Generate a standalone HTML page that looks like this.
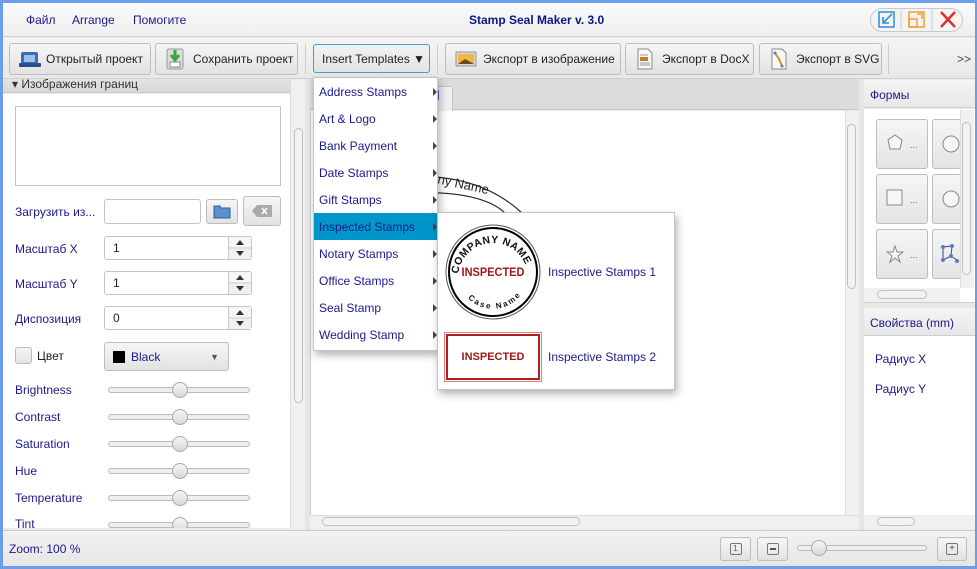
<!DOCTYPE html>
<html><head><meta charset="utf-8"><style>
*{box-sizing:border-box;margin:0;padding:0}
body{width:977px;height:569px;overflow:hidden;background:#6b9de8;font-family:"Liberation Sans","DejaVu Sans",sans-serif;font-size:12px;color:#1a1a8c;position:relative}
.a{position:absolute}
.win{left:3px;top:3px;width:972px;height:563px;background:#ececec}
.btn{position:absolute;border:1px solid #bdbdbd;border-radius:3px;background:linear-gradient(#f6f6f6,#e2e2e2);font-size:12px;color:#222;display:flex;align-items:center}
.tl{color:#1a1a8c;font-size:12px}
.sl{position:absolute;left:108px;width:142px;height:6px;border:1px solid #bbb;border-radius:3px;background:#eee}
.knob{position:absolute;left:63px;top:-6px;width:16px;height:16px;border-radius:50%;border:1px solid #aaa;background:linear-gradient(#f5f5f5,#d8d8d8)}
.spin{position:absolute;left:104px;width:148px;height:24px;border:1px solid #c4c4c4;border-radius:3px;background:#fff;color:#222;padding:4px 8px}
.spin b{position:absolute;right:0;top:0;width:23px;height:22px;border-left:1px solid #c8c8c8;background:linear-gradient(#f6f6f6 48%,#ccc 48%,#ccc 52%,#f0f0f0 52%)}
.spin b:before{content:"";position:absolute;left:7px;top:3px;border-bottom:5px solid #333;border-left:4px solid transparent;border-right:4px solid transparent}
.spin b:after{content:"";position:absolute;left:7px;top:14px;border-top:5px solid #333;border-left:4px solid transparent;border-right:4px solid transparent}
.mi{position:absolute;left:0;width:124px;height:27px;padding:7px 5px;font-size:12px;color:#1a1a8c}
.mi:after{content:"";position:absolute;right:1px;top:10px;border-left:4px solid #444;border-top:4px solid transparent;border-bottom:4px solid transparent}
.sb{position:absolute;background:#f0f0f0;border-left:1px solid #ddd}
.thumb{position:absolute;border:1px solid #c0c0c0;border-radius:5px;background:#f2f2f2}
.sh{position:absolute;width:52px;height:50px;border:1px solid #bdbdbd;border-radius:3px;background:linear-gradient(#f6f6f6,#e4e4e4)}
</style></head><body>
<div class="a win"></div>
<div class="a" style="left:3px;top:3px;width:972px;height:34px;background:linear-gradient(#fafafa,#efefef);border-bottom:1px solid #cfcfcf"></div>
<div class="a tl" style="left:26px;top:13px">Файл</div>
<div class="a tl" style="left:72px;top:13px">Arrange</div>
<div class="a tl" style="left:133px;top:13px">Помогите</div>
<div class="a" style="left:469px;top:13px;font-weight:bold;color:#0d1580;font-size:12px">Stamp Seal Maker v. 3.0</div>
<div class="a" style="left:870px;top:8px;width:93px;height:24px;border:1px solid #c8c8c8;border-radius:12px;background:#f4f4f4"></div>
<svg class="a" style="left:870px;top:8px" width="93" height="24"><line x1="31" y1="2" x2="31" y2="22" stroke="#ccc"/><line x1="62" y1="2" x2="62" y2="22" stroke="#ccc"/>
<rect x="9" y="4" width="15" height="15" fill="none" stroke="#2d8fd8" stroke-width="1.5"/><path d="M22 6 L13 15 M13 9 V15 H19" stroke="#2d8fd8" stroke-width="1.6" fill="none"/>
<rect x="39" y="4" width="15" height="15" fill="none" stroke="#f0a030" stroke-width="1.5"/><rect x="39" y="11" width="8" height="8" fill="none" stroke="#f0a030" stroke-width="1.5"/><path d="M47 6 H52 V11" stroke="#f0a030" fill="none" stroke-width="1.5"/>
<path d="M71 4 L85 19 M85 4 L71 19" stroke="#e03030" stroke-width="2.5"/></svg>
<div class="a" style="left:3px;top:38px;width:972px;height:41px;background:linear-gradient(#f4f4f4,#e8e8e8);border-bottom:1px solid #d0d0d0"></div>
<div class="btn" style="left:9px;top:43px;width:142px;height:32px;padding-left:9px"><svg width="22" height="18"><rect x="2" y="2" width="17" height="12" rx="2" fill="#3a6db8"/><rect x="5" y="5" width="11" height="7" fill="#9ec0ea"/><rect x="0" y="13" width="22" height="4" rx="1" fill="#2a4f90"/></svg><span style="margin-left:5px">Открытый проект</span></div>
<div class="btn" style="left:155px;top:43px;width:143px;height:32px;padding-left:9px"><svg width="20" height="22"><rect x="2" y="1" width="16" height="20" rx="2" fill="#ddd" stroke="#999"/><rect x="5" y="14" width="10" height="5" fill="#fff" stroke="#888"/><path d="M10 2 V11 M6 7 L10 12 L14 7" stroke="#3aa53a" stroke-width="3" fill="none"/></svg><span style="margin-left:8px">Сохранить проект</span></div>
<div class="a" style="left:305px;top:44px;width:1px;height:30px;background:#ccc"></div>
<div class="btn" style="left:313px;top:44px;width:117px;height:29px;border-color:#3aa0d8;padding-left:8px;background:linear-gradient(#f2f2f2,#e4e4e4)">Insert Templates ▼</div>
<div class="a" style="left:437px;top:44px;width:1px;height:30px;background:#ccc"></div>
<div class="btn" style="left:445px;top:43px;width:176px;height:32px;padding-left:9px"><svg width="22" height="18"><rect x="1" y="2" width="20" height="14" fill="#d8d8d8" stroke="#999"/><rect x="3" y="4" width="16" height="10" fill="#f0b840"/><path d="M3 14 L10 9 L19 14Z" fill="#6a4a20"/></svg><span style="margin-left:6px">Экспорт в изображение</span></div>
<div class="btn" style="left:625px;top:43px;width:129px;height:32px;padding-left:10px"><svg width="18" height="22"><path d="M2 1 H12 L16 5 V21 H2Z" fill="#f8f8f8" stroke="#888"/><rect x="4" y="9" width="8" height="4" fill="#c08020"/><path d="M4 15 H14 M4 17 H14 M4 7 H12" stroke="#999"/></svg><span style="margin-left:8px">Экспорт в DocX</span></div>
<div class="btn" style="left:759px;top:43px;width:123px;height:32px;padding-left:10px"><svg width="18" height="22"><path d="M2 1 H12 L16 5 V21 H2Z" fill="#f8f8f8" stroke="#888"/><path d="M5 5 L9 11 L12 18" stroke="#e09020" stroke-width="2" fill="none"/><circle cx="5" cy="5" r="1.5" fill="#5580c0"/><circle cx="12" cy="18" r="1.5" fill="#5580c0"/></svg><span style="margin-left:8px">Экспорт в SVG</span></div>
<div class="a" style="left:888px;top:44px;width:1px;height:30px;background:#ccc"></div>
<div class="a" style="left:957px;top:52px;color:#444;font-size:12px">&gt;&gt;</div>
<div class="a" style="left:3px;top:79px;width:287px;height:14px;background:linear-gradient(#e4e4e4,#d8d8d8);border-bottom:1px solid #c8c8c8"></div>
<div class="a" style="left:12px;top:77px;font-size:12px;color:#333">▾ Изображения границ</div>
<div class="a" style="left:3px;top:94px;width:287px;height:436px;background:#fff"></div>
<div class="a" style="left:15px;top:106px;width:266px;height:80px;border:1px solid #c4c4c4"></div>
<div class="a tl" style="left:15px;top:205px">Загрузить из...</div>
<div class="a" style="left:104px;top:199px;width:97px;height:25px;border:1px solid #c4c4c4;border-radius:3px;background:#fff"></div>
<div class="btn" style="left:206px;top:199px;width:32px;height:25px;justify-content:center"><svg width="18" height="15"><path d="M1 2 H7 L8 4 H17 V14 H1Z" fill="#5a8fd0" stroke="#2f5f9f"/></svg></div>
<div class="btn" style="left:243px;top:196px;width:38px;height:30px;justify-content:center"><svg width="20" height="12"><path d="M5 0 H20 V12 H5 L0 6Z" fill="#aaa"/><path d="M10 3 L15 9 M15 3 L10 9" stroke="#fff" stroke-width="1.5"/></svg></div>
<div class="a tl" style="left:15px;top:242px">Масштаб X</div><div class="spin" style="top:236px">1<b></b></div>
<div class="a tl" style="left:15px;top:277px">Масштаб Y</div><div class="spin" style="top:271px">1<b></b></div>
<div class="a tl" style="left:15px;top:312px">Диспозиция</div><div class="spin" style="top:306px">0<b></b></div>
<div class="a" style="left:15px;top:347px;width:17px;height:17px;border:1px solid #bbb;border-radius:3px;background:linear-gradient(#f6f6f6,#e4e4e4)"></div>
<div class="a" style="left:37px;top:349px;color:#222">Цвет</div>
<div class="btn" style="left:104px;top:342px;width:125px;height:29px;padding-left:8px"><span style="width:12px;height:12px;background:#000;display:inline-block"></span><span style="margin-left:6px;color:#1a1a8c">Black</span><span style="margin-left:auto;margin-right:9px;font-size:9px;color:#555">▼</span></div>
<div class="a tl" style="left:15px;top:383px">Brightness</div><div class="sl" style="top:387px"><div class="knob"></div></div>
<div class="a tl" style="left:15px;top:410px">Contrast</div><div class="sl" style="top:414px"><div class="knob"></div></div>
<div class="a tl" style="left:15px;top:437px">Saturation</div><div class="sl" style="top:441px"><div class="knob"></div></div>
<div class="a tl" style="left:15px;top:464px">Hue</div><div class="sl" style="top:468px"><div class="knob"></div></div>
<div class="a tl" style="left:15px;top:491px">Temperature</div><div class="sl" style="top:495px"><div class="knob"></div></div>
<div class="a tl" style="left:15px;top:517px">Tint</div><div class="sl" style="top:522px"><div class="knob"></div></div>
<div class="a" style="left:3px;top:528px;width:300px;height:2px;background:#ececec"></div>
<div class="sb" style="left:290px;top:80px;width:15px;height:449px"></div>
<div class="thumb" style="left:294px;top:128px;width:9px;height:275px"></div>
<div class="a" style="left:305px;top:79px;width:5px;height:451px;background:#e6e6e6"></div>
<div class="a" style="left:310px;top:79px;width:550px;height:31px;background:#dcdcdc;border-bottom:1px solid #c4c4c4"></div>
<div class="a" style="left:420px;top:86px;width:33px;height:25px;background:#f0f0f0;border:1px solid #c4c4c4;border-bottom:none;border-radius:3px 3px 0 0"></div>
<div class="a" style="left:431px;top:90px;width:8px;height:10px;background:#3a6db8"></div>
<div class="a" style="left:310px;top:111px;width:535px;height:404px;background:#fff;border-left:1px solid #c8c8c8"></div>
<svg class="a" style="left:310px;top:111px" width="535" height="404">
<path d="M90 66 Q170 60 215 105" stroke="#222" stroke-width="1.2" fill="none"/>
<path d="M90 82 Q170 78 195 102" stroke="#222" stroke-width="1.2" fill="none"/>
<text x="128" y="77" font-family="Liberation Sans" font-size="13" fill="#222" transform="rotate(12 150 70)">ny Name</text>
</svg>
<div class="sb" style="left:845px;top:111px;width:14px;height:405px"></div>
<div class="thumb" style="left:847px;top:124px;width:9px;height:165px"></div>
<div class="a" style="left:310px;top:515px;width:549px;height:14px;background:#f0f0f0;border-top:1px solid #ddd"></div>
<div class="thumb" style="left:322px;top:517px;width:258px;height:9px"></div>
<div class="a" style="left:859px;top:79px;width:5px;height:451px;background:#e6e6e6"></div>
<div class="a" style="left:864px;top:80px;width:111px;height:28px;background:linear-gradient(#f4f4f4,#e8e8e8);border-bottom:1px solid #cfcfcf"></div>
<div class="a tl" style="left:870px;top:88px">Формы</div>
<div class="a" style="left:864px;top:109px;width:111px;height:193px;background:#fff"></div>
<div class="sh" style="left:876px;top:119px"></div><div class="sh" style="left:932px;top:119px;width:30px"></div>
<div class="sh" style="left:876px;top:174px"></div><div class="sh" style="left:932px;top:174px;width:30px"></div>
<div class="sh" style="left:876px;top:229px"></div><div class="sh" style="left:932px;top:229px;width:30px"></div>
<svg class="a" style="left:876px;top:119px" width="90" height="160">
<path d="M19 16 L26 21 L24 30 H14 L12 21Z" fill="#f6f6f6" stroke="#888"/><text x="34" y="29" font-size="9" fill="#666">...</text>
<circle cx="75" cy="25" r="8" fill="#f6f6f6" stroke="#888"/>
<rect x="11" y="71" width="15" height="15" fill="#f6f6f6" stroke="#888"/><text x="34" y="84" font-size="9" fill="#666">...</text>
<circle cx="75" cy="80" r="8" fill="#f6f6f6" stroke="#888"/>
<path d="M19 127 L21 133 H27 L22 137 L24 143 L19 139 L14 143 L16 137 L11 133 H17Z" fill="#f6f6f6" stroke="#888"/><text x="34" y="139" font-size="9" fill="#666">...</text>
<path d="M67 128 L76 127 L75 137 L67 141Z M75 137 L81 141" stroke="#2a4f90" fill="none"/><g fill="#5580c0"><circle cx="67" cy="128" r="2"/><circle cx="76" cy="127" r="2"/><circle cx="75" cy="137" r="2"/><circle cx="67" cy="141" r="2"/><circle cx="81" cy="142" r="2"/></g>
</svg>
<div class="sb" style="left:960px;top:110px;width:14px;height:178px"></div>
<div class="thumb" style="left:962px;top:122px;width:9px;height:153px"></div>
<div class="a" style="left:864px;top:288px;width:96px;height:14px;background:#f0f0f0"></div>
<div class="thumb" style="left:877px;top:290px;width:50px;height:9px"></div>
<div class="a" style="left:864px;top:302px;width:111px;height:6px;background:#e8e8e8;border-top:1px solid #d0d0d0"></div>
<div class="a" style="left:864px;top:308px;width:111px;height:28px;background:linear-gradient(#f4f4f4,#e8e8e8);border-bottom:1px solid #cfcfcf"></div>
<div class="a tl" style="left:870px;top:316px">Свойства (mm)</div>
<div class="a" style="left:864px;top:336px;width:111px;height:180px;background:#fff"></div>
<div class="a tl" style="left:875px;top:352px">Радиус X</div>
<div class="a tl" style="left:875px;top:382px">Радиус Y</div>
<div class="a" style="left:864px;top:515px;width:111px;height:14px;background:#f0f0f0"></div>
<div class="thumb" style="left:877px;top:517px;width:38px;height:9px"></div>
<div class="a" style="left:3px;top:530px;width:972px;height:36px;background:linear-gradient(#f2f2f2,#e6e6e6);border-top:1px solid #ccc"></div>
<div class="a tl" style="left:9px;top:542px">Zoom: 100 %</div>
<div class="btn" style="left:720px;top:537px;width:31px;height:24px;justify-content:center"><span style="width:12px;height:12px;border:1px solid #777;border-radius:2px;font-size:8px;line-height:10px;text-align:center;color:#555">1</span></div>
<div class="btn" style="left:757px;top:537px;width:31px;height:24px;justify-content:center"><span style="width:12px;height:12px;border:1px solid #777;border-radius:2px;position:relative"><i style="position:absolute;left:2px;top:4px;width:6px;height:2px;border:1px solid #555"></i></span></div>
<div class="a" style="left:797px;top:545px;width:130px;height:6px;border:1px solid #bbb;border-radius:3px;background:#eee"></div>
<div class="knob a" style="left:811px;top:540px"></div>
<div class="btn" style="left:937px;top:537px;width:30px;height:24px;justify-content:center"><span style="width:12px;height:12px;border:1px solid #777;border-radius:2px;font-size:10px;line-height:10px;text-align:center;color:#555">+</span></div>
<div class="a" style="left:313px;top:77px;width:125px;height:274px;background:#fff;border:1px solid #c4c4c4;box-shadow:2px 4px 8px rgba(0,0,0,.3)">
<div class="mi" style="top:0">Address Stamps</div>
<div class="mi" style="top:27px">Art &amp; Logo</div>
<div class="mi" style="top:54px">Bank Payment</div>
<div class="mi" style="top:81px">Date Stamps</div>
<div class="mi" style="top:108px">Gift Stamps</div>
<div class="mi" style="top:135px;background:#0096c9;color:#1a1a8c">Inspected Stamps</div>
<div class="mi" style="top:162px">Notary Stamps</div>
<div class="mi" style="top:189px">Office Stamps</div>
<div class="mi" style="top:216px">Seal Stamp</div>
<div class="mi" style="top:243px">Wedding Stamp</div>
</div>
<div class="a" style="left:437px;top:212px;width:238px;height:178px;background:#fff;border:1px solid #c4c4c4;box-shadow:2px 4px 8px rgba(0,0,0,.3)">
<svg class="a" style="left:6px;top:9px" width="100" height="100">
<circle cx="49" cy="50" r="47" fill="none" stroke="#555" stroke-width="1"/>
<circle cx="49" cy="50" r="44" fill="none" stroke="#000" stroke-width="2"/>
<defs><path id="tp" d="M14 56 A35 35 0 0 1 84 56"/><path id="bp" d="M18 68 A35 35 0 0 0 80 68"/></defs>
<text font-family="Liberation Sans" font-weight="bold" font-size="10.5" fill="#111" letter-spacing="0.5"><textPath href="#tp" startOffset="4">COMPANY NAME</textPath></text>
<text font-family="Liberation Sans" font-weight="bold" font-size="8" fill="#111" letter-spacing="2"><textPath href="#bp" startOffset="10">Case Name</textPath></text>
<text x="49" y="54" text-anchor="middle" font-family="Liberation Sans" font-weight="bold" font-size="11" fill="#a01818" transform="scale(1 1.1) translate(0 -5)">INSPECTED</text>
</svg>
<div class="a tl" style="left:110px;top:52px">Inspective Stamps 1</div>
<div class="a" style="left:6px;top:119px;width:98px;height:50px;border:1px solid #e08080"></div>
<div class="a" style="left:8px;top:121px;width:94px;height:46px;border:2px solid #b02020;text-align:center;line-height:42px;font-weight:bold;font-size:11px;color:#a01818">INSPECTED</div>
<div class="a tl" style="left:110px;top:137px">Inspective Stamps 2</div>
</div>
</body></html>
